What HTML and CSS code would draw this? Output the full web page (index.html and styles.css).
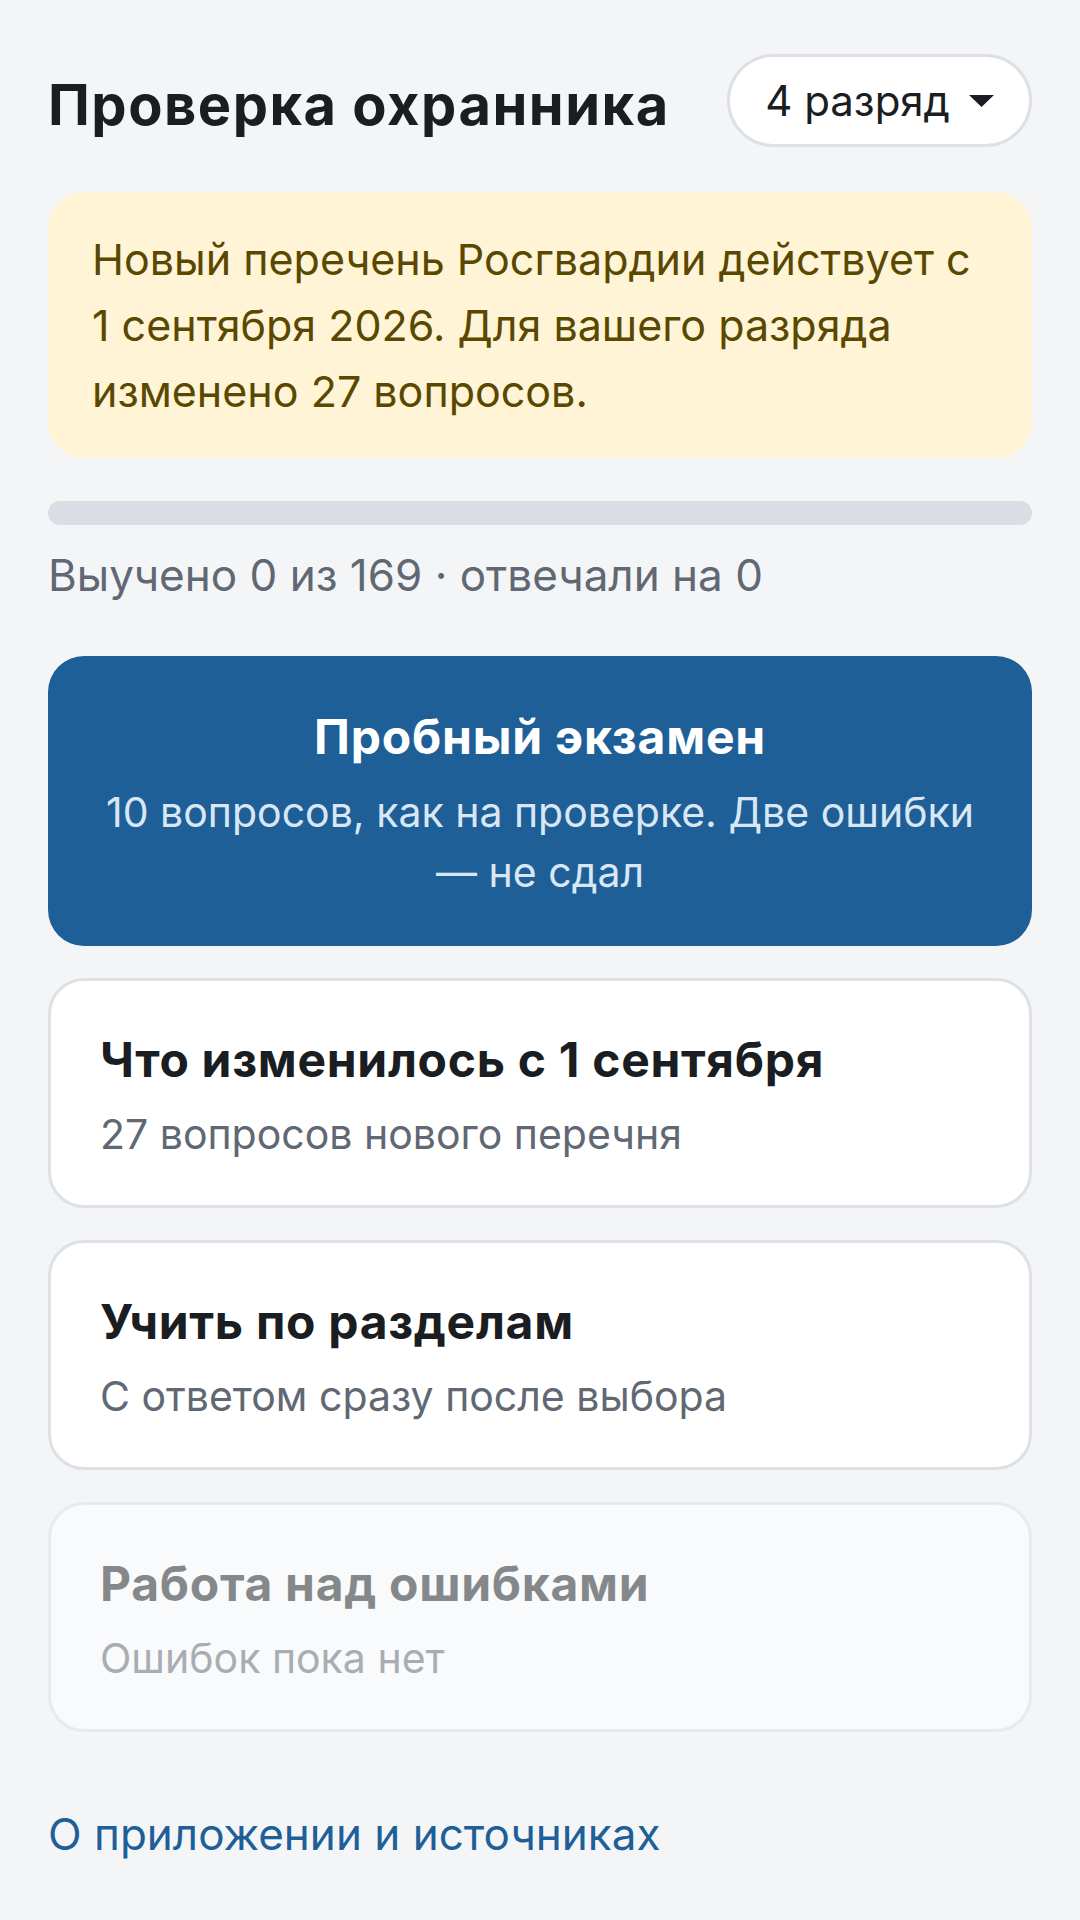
FILE: index.html
```html
<!DOCTYPE html>
<html lang="ru">
<head>
    <meta charset="UTF-8">
    <meta name="viewport" content="width=device-width, initial-scale=1.0">
    <title>Проверка охранника</title>
    <link rel="stylesheet" href="styles.css">
</head>
<body>
    <div class="app">
        <div class="header">
            <h1 class="title">Проверка охранника</h1>
            <button class="grade">
                <span>4 разряд</span>
                <svg class="caret" width="25" height="12" viewBox="0 0 25 12"><polygon points="0,0 25,0 12.5,12" fill="#1a1d21"/></svg>
            </button>
        </div>

        <div class="notice">
            Новый перечень Росгвардии действует с 1 сентября 2026. Для вашего разряда изменено 27 вопросов.
        </div>

        <div class="progress"><div class="progress-fill"></div></div>
        <p class="stats">Выучено 0 из 169 · отвечали на 0</p>

        <div class="menu">
            <button class="exam">
                <span class="exam-title">Пробный экзамен</span>
                <span class="exam-sub">10 вопросов, как на проверке. Две ошибки — не сдал</span>
            </button>

            <button class="card">
                <span class="card-title">Что изменилось с 1 сентября</span>
                <span class="card-sub">27 вопросов нового перечня</span>
            </button>

            <button class="card">
                <span class="card-title">Учить по разделам</span>
                <span class="card-sub">С ответом сразу после выбора</span>
            </button>

            <button class="card disabled" disabled>
                <span class="card-title">Работа над ошибками</span>
                <span class="card-sub">Ошибок пока нет</span>
            </button>
        </div>

        <a class="about" href="#">О приложении и источниках</a>
    </div>
</body>
</html>
```

FILE: styles.css
```css
body {
    margin: 0;
    background: #f3f5f7;
    font-family: Inter, "Noto Sans", sans-serif;
    color: #1a1d21;
}
.app {
    padding: 54px 48px 48px;
}
.header {
    display: flex;
    justify-content: space-between;
    align-items: center;
}
.title {
    margin: 0;
    padding-top: 10px;
    font-size: 56px;
    font-weight: 700;
    line-height: 1.2;
    letter-spacing: 1.5px;
}
.grade {
    display: flex;
    align-items: center;
    gap: 19px;
    height: 93px;
    padding: 0 35px;
    background: #fff;
    border: 3px solid #dde0e4;
    border-radius: 47px;
    font-family: inherit;
    font-size: 42px;
    color: #1a1d21;
}
.notice {
    margin-top: 45px;
    padding: 34px 44px;
    background: #fff4d6;
    border-radius: 36px;
    font-size: 43px;
    line-height: 66px;
    color: #5a4800;
}
.progress {
    margin-top: 43px;
    height: 24px;
    border-radius: 12px;
    background: #d9dee4;
    overflow: hidden;
}
.progress-fill {
    width: 0;
    height: 100%;
    background: #1f5f98;
}
.stats {
    margin: 23px 0 0;
    font-size: 44px;
    color: #5f6873;
}
.menu {
    display: flex;
    flex-direction: column;
    gap: 32px;
    margin-top: 54px;
}
.menu button {
    display: flex;
    flex-direction: column;
    width: 100%;
    font-family: inherit;
    cursor: pointer;
}
.exam {
    align-items: center;
    padding: 52px 48px 44px;
    background: #1f5f98;
    border: none;
    border-radius: 36px;
    color: #fff;
    text-align: center;
}
.exam-title {
    font-size: 48px;
    font-weight: 700;
    line-height: 57px;
    letter-spacing: 0.8px;
}
.exam-sub {
    margin-top: 17px;
    font-size: 41px;
    line-height: 60px;
    color: #d9e7f4;
}
.card {
    align-items: flex-start;
    padding: 50px 49px 44px;
    background: #fff;
    border: 3px solid #dde1e6;
    border-radius: 36px;
    text-align: left;
}
.card-title {
    font-size: 48px;
    font-weight: 700;
    line-height: 58px;
    letter-spacing: 0.7px;
    color: #1a1d21;
}
.card-sub {
    margin-top: 18px;
    font-size: 41px;
    line-height: 54px;
    color: #5f6873;
}
.card.disabled {
    opacity: 0.5;
    cursor: default;
}
.about {
    display: inline-block;
    margin-top: 75px;
    font-size: 44px;
    color: #1f5f98;
    text-decoration: none;
}
```
